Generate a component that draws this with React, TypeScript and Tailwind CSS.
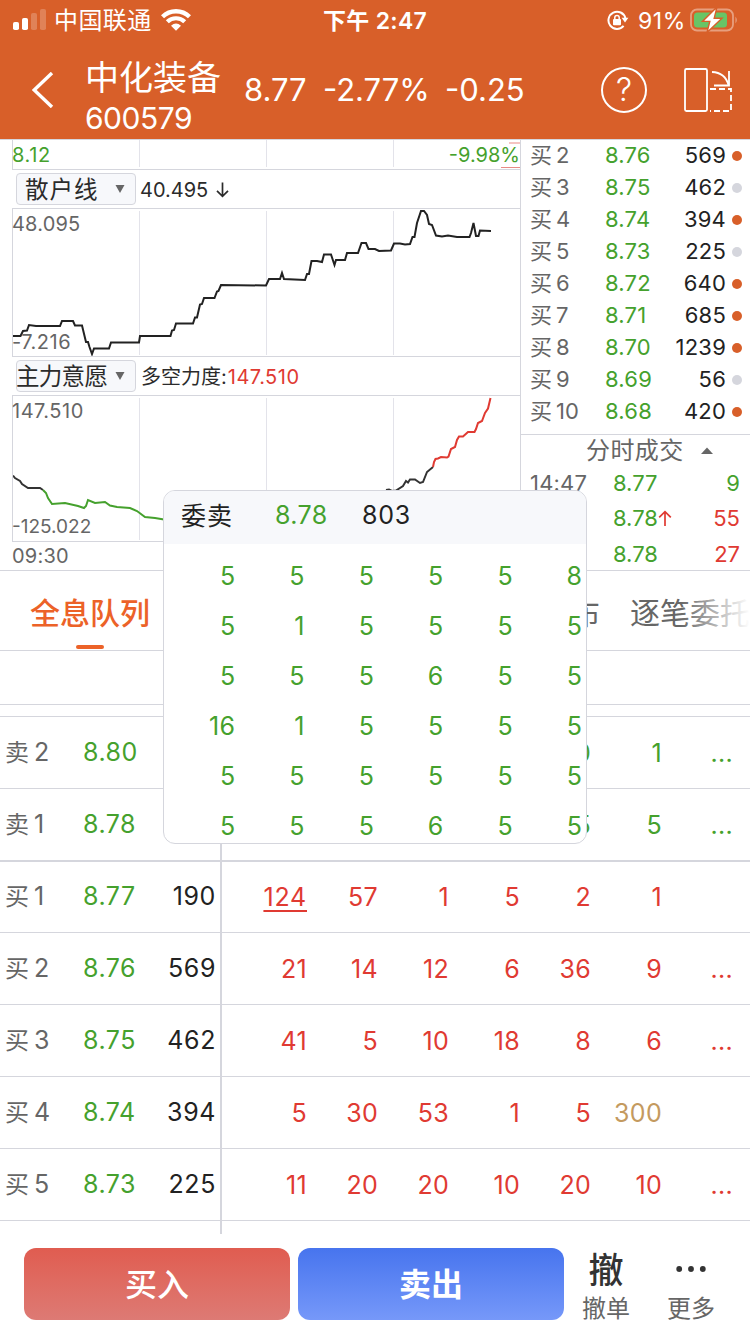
import React from 'react';

const buyLevels = [
  { level: '2', price: '8.76', volume: '569', active: true },
  { level: '3', price: '8.75', volume: '462', active: false },
  { level: '4', price: '8.74', volume: '394', active: true },
  { level: '5', price: '8.73', volume: '225', active: false },
  { level: '6', price: '8.72', volume: '640', active: true },
  { level: '7', price: '8.71', volume: '685', active: true },
  { level: '8', price: '8.70', volume: '1239', active: true },
  { level: '9', price: '8.69', volume: '56', active: false },
  { level: '10', price: '8.68', volume: '420', active: true },
];

const trades = [
  { time: '14:47', price: '8.77', arrow: false, volume: '9', up: false },
  { time: '', price: '8.78', arrow: true, volume: '55', up: true },
  { time: '', price: '8.78', arrow: false, volume: '27', up: true },
];

const sellQueue = [
  { side: '卖', level: '2', price: '8.80', volume: '', orders: ['', '', '', '', '10', '1', '...'] },
  { side: '卖', level: '1', price: '8.78', volume: '', orders: ['', '', '', '', '5', '5', '...'] },
];

const buyQueue = [
  { side: '买', level: '1', price: '8.77', volume: '190', orders: ['124', '57', '1', '5', '2', '1', ''] },
  { side: '买', level: '2', price: '8.76', volume: '569', orders: ['21', '14', '12', '6', '36', '9', '...'] },
  { side: '买', level: '3', price: '8.75', volume: '462', orders: ['41', '5', '10', '18', '8', '6', '...'] },
  { side: '买', level: '4', price: '8.74', volume: '394', orders: ['5', '30', '53', '1', '5', '300', ''] },
  { side: '买', level: '5', price: '8.73', volume: '225', orders: ['11', '20', '20', '10', '20', '10', '...'] },
];

const popupOrders = [
  ['5', '5', '5', '5', '5', '8'],
  ['5', '1', '5', '5', '5', '5'],
  ['5', '5', '5', '6', '5', '5'],
  ['16', '1', '5', '5', '5', '5'],
  ['5', '5', '5', '5', '5', '5'],
  ['5', '5', '5', '6', '5', '5'],
];

const retailLine =
  '13,336 20.5,336 23,331 27,330.5 29,325 36,326 60,326 62,321 73,321 75,325.5 82,325.5 86,342 88,342 89.5,347 92,354 94,348.5 109,348.5 111,342.5 139,342.5 140,336 170.5,336 172,330.5 174,330 176,323.5 193,323.5 195,317.5 197,317.5 200,304.5 202,304 204,298 214.5,298 217,291.5 218.5,291 221,285 266,285.5 269,279 280,279 282,273 284,279 305,280 307,274 309,274 311.5,261 317,261 322,262 324,254.5 331,254.5 334.5,265 336,260 345,260 347,253 358,253 361.5,243 366,243 368.5,249 375,249 379,251 391,250.5 394,243.5 400,243.5 405,244.5 410,244 412.5,237 414.5,237 417,223 421,211 424,211 427,215 429,224 432,225 436,235.5 442,236.5 448,235.5 457,237 469.5,237 471,233 473.5,223 476,236 478.5,236 480,230.5 491,231';

const StatusBar = () => (
  <div className="flex h-10 items-center text-white">
    <svg className="ml-[13px] h-[22px] w-[34px]" viewBox="0 0 34 22" fill="#fff">
      <rect x="0" y="13" width="6" height="8" rx="1.8" />
      <rect x="9" y="9" width="6" height="12" rx="1.8" />
      <rect x="18" y="4" width="6" height="17" rx="1.8" opacity="0.22" />
      <rect x="27" y="0" width="6" height="21" rx="1.8" opacity="0.22" />
    </svg>
    <span className="ml-[7px] w-[98px] pt-0.5 text-[24px] leading-none tracking-[0.4px] whitespace-nowrap">中国联通</span>
    <svg className="ml-[9px] h-[22px] w-[30px]" viewBox="0 0 30 22" fill="none" stroke="#fff">
      <path d="M1.5 7.8 A19.3 19.3 0 0 1 28.5 7.8" strokeWidth="4.4" />
      <path d="M6.3 12.8 A12.4 12.4 0 0 1 23.7 12.8" strokeWidth="4.2" />
      <path d="M10 16.8 Q15 12.4 20 16.8 L15 21.8 Z" fill="#fff" stroke="none" />
    </svg>
    <span className="ml-[132px] w-[106px] pt-0.5 text-[23px] font-semibold leading-none tracking-[0.3px] whitespace-nowrap">
      下午 2:47
    </span>
    <svg className="ml-[178px] h-5 w-[22px]" viewBox="0 0 22 20" fill="none" stroke="#fff" strokeWidth="2">
      <path d="M16.6 15.9 A8.6 8.6 0 1 1 18.4 8.2" />
      <path d="M14.6 7.8 H21.4 L18 12.6 Z" fill="#fff" stroke="none" />
      <rect x="6" y="9" width="8" height="6.2" rx="1" fill="#fff" stroke="none" />
      <path d="M7.8 9.5 V7.6 A2.2 2.2 0 0 1 12.2 7.6 V9.5" strokeWidth="1.5" />
    </svg>
    <span className="ml-[9px] w-[49px] pt-0.5 text-[23px] leading-none tracking-[0.6px] whitespace-nowrap">91%</span>
    <svg className="ml-[3px] h-6 w-[50px]" viewBox="0 0 50 24" fill="none">
      <rect x="1" y="1.5" width="42" height="21" rx="6" stroke="#fff" strokeOpacity="0.4" strokeWidth="1.8" />
      <path d="M45.5 8.5 Q48 12 45.5 15.5 Z" fill="#fff" fillOpacity="0.45" />
      <rect x="4" y="4.5" width="33" height="15" rx="3.5" fill="#68c466" />
      <path d="M27 -1 L12.5 13.4 H19.8 L17 24.5 L32 10.2 H24.2 Z" fill="#fff" stroke="#d85f29" strokeWidth="1.4" />
    </svg>
  </div>
);

const TitleBar = () => (
  <div className="flex h-[99px] items-center text-white">
    <svg className="ml-8 h-9 w-[22px]" viewBox="0 0 22 36" fill="none" stroke="#fff" strokeWidth="3.4">
      <path d="M20 1 L2.2 18 L20 35" />
    </svg>
    <div className="ml-[31px] w-[135px] pt-3.5">
      <div className="mt-0.5 text-[34px] leading-[40px] whitespace-nowrap">中化装备</div>
      <div className="mt-px text-[30px] leading-[38px] tracking-[-0.5px]">600579</div>
    </div>
    <div className="ml-6 flex h-9 w-[290px] items-center text-[31px] leading-none whitespace-nowrap">
      <span className="w-[79px]">8.77</span>
      <span className="w-[122px]">-2.77%</span>
      <span>-0.25</span>
    </div>
    <div className="ml-[67px] flex h-[46px] w-[46px] items-center justify-center rounded-full border-2 border-white text-[32px] leading-none font-light">
      ?
    </div>
    <svg className="ml-[36px] h-[46px] w-[50px]" viewBox="0 0 50 46" fill="none" stroke="#fff" strokeWidth="1.8">
      <rect x="2" y="2" width="22" height="42" rx="1.5" />
      <path d="M29 5 Q42 5.5 45.5 18" />
      <path d="M46 4 V18.5 H31" />
      <path d="M27 22 H48 V44 H27" strokeDasharray="6 3" />
    </svg>
  </div>
);

const IndicatorSelect = ({ name, padded }: { name: string; padded?: boolean }) => (
  <div
    className={`flex h-8 w-[120px] items-center rounded border border-[#d5d6dd] bg-[#f7f8fb] text-[#2b2b2b] ${
      padded ? 'pl-2' : 'pl-0'
    }`}
  >
    <span
      className={`pt-0.5 text-[23.5px] leading-none whitespace-nowrap ${
        padded ? 'w-[90px] tracking-[1px]' : '-ml-px w-[99px] tracking-[-0.7px]'
      }`}
    >
      {name}
    </span>
    <svg className="mb-px h-2 w-[10px]" viewBox="0 0 10 8" fill="#666">
      <path d="M0.5 0 H9.5 L5 8 Z" />
    </svg>
  </div>
);

const GridLines = ({ top, bottom }: { top: number; bottom: number }) => (
  <g stroke="#e3e3ea" strokeWidth="1">
    <path d={`M139.5 ${top} V${bottom} M266.5 ${top} V${bottom} M393.5 ${top} V${bottom}`} />
  </g>
);

const ChartPanel = () => (
  <div className="w-[521px] border-r border-[#d5d6dd] pl-3">
    <div className="relative flex h-[30px] justify-between border-b border-l border-[#d5d6dd] text-[20px] leading-[31px] text-[#45a12d]">
      <svg className="absolute inset-0 h-[29px] w-[507px]" viewBox="13 140 507 29" fill="none">
        <GridLines top={140} bottom={167} />
        <path d="M509 143 H520" stroke="#f5c4c2" strokeWidth="2" />
        <path d="M501 167.5 H520" stroke="#e88a86" />
      </svg>
      <span className="relative -ml-px tracking-[0.6px]">8.12</span>
      <span className="relative">-9.98%</span>
    </div>
    <div className="flex h-[38px] items-center pl-1 text-[#2b2b2b]">
      <IndicatorSelect name="散户线" padded />
      <span className="ml-1 pt-0.5 text-[20px] leading-none">40.495</span>
      <svg className="mt-0.5 ml-2 h-4 w-[13px]" viewBox="0 0 13 16" fill="none" stroke="#2b2b2b" strokeWidth="1.7">
        <path d="M6.5 0.5 V14 M1 8.8 L6.5 14.3 L12 8.8" />
      </svg>
    </div>
    <div className="relative h-[149px] border-y border-l border-[#d5d6dd] text-[20px] leading-none tracking-[0.2px] text-[#666]">
      <svg className="absolute inset-0 h-[147px] w-[507px]" viewBox="13 209 507 147" fill="none">
        <GridLines top={211} bottom={355} />
        <polyline points={retailLine} stroke="#222" strokeWidth="2" />
      </svg>
      <div className="relative -ml-px flex h-full flex-col justify-between pt-[5px] pb-1">
        <span>48.095</span>
        <span className="tracking-[0.5px]">-7.216</span>
      </div>
    </div>
    <div className="flex h-[38px] items-center pl-1 text-[#2b2b2b]">
      <IndicatorSelect name="主力意愿" />
      <span className="ml-[5px] pt-0.5 text-[20px] leading-none whitespace-nowrap">
        多空力度:<span className="ml-px tracking-[0.5px] text-[#e03a32]">147.510</span>
      </span>
    </div>
    <div className="relative h-[147px] border-y border-l border-[#d5d6dd] text-[20px] leading-none text-[#666]">
      <svg className="absolute inset-0 h-[145px] w-[507px]" viewBox="13 396 507 145" fill="none" strokeWidth="2">
        <GridLines top={398} bottom={540} />
        <polyline stroke="#333" points="13,475.5 15,478 20,481 22,484 28,488 40,488 43,490" />
        <polyline
          stroke="#45a12d"
          points="43,490 46,493 48,498 52,504 65,503 78,506 84,508 86,506 88,500 95,503 105,502 110,505.5 117,507 130,508 137,511 145,517 155,518 164,519.5"
        />
        <polyline
          stroke="#333"
          points="386,490 389,489.5 392,491 396,490.5 403,486 406,481 408,482.5 410,479.5 415,479.5 420,483 423,482 427,472 433,467"
        />
        <polyline
          stroke="#e03a32"
          points="433,467 434,462 435.5,459 438,458.5 441,457 447,457.5 448.5,456.5 451,449 455,447 457,440 459,436.5 463,436.5 468,432 474.5,432 476,429 478,423 482,421 485,413 488,408.5 490.5,398"
        />
      </svg>
      <div className="relative -ml-px flex h-full flex-col justify-between pt-[5px] pb-[5px]">
        <span className="tracking-[0.5px]">147.510</span>
        <span className="text-[19px]">-125.022</span>
      </div>
    </div>
    <div className="pt-0.5 text-[20px] leading-[24px] tracking-[0.2px] text-[#666]">09:30</div>
  </div>
);

const OrderBook = () => (
  <div className="w-[229px]">
    <div className="h-[295px] border-b border-[#d5d6dd]">
      {buyLevels.map((row) => (
        <div key={row.level} className="flex h-8 items-center pb-0.5 pl-[9px] text-[22px] leading-none">
          <span className="w-[26px] text-[#666]">买</span>
          <span className="w-[49px] text-[#666]">{row.level}</span>
          <span className="w-[50px] tracking-[0.2px] text-[#45a12d]">{row.price}</span>
          <span className="w-[71px] text-right tracking-[0.2px] text-[#222]">{row.volume}</span>
          <span className={`mt-0.5 ml-1.5 h-2.5 w-2.5 rounded-full ${row.active ? 'bg-[#d85f29]' : 'bg-[#d5d6dd]'}`} />
        </div>
      ))}
    </div>
    <div className="flex h-[30px] items-center pl-[65px] text-[24px] leading-none text-[#666]">
      <span className="pt-0.5 tracking-[0.4px]">分时成交</span>
      <svg className="ml-[17px] h-[7px] w-3" viewBox="0 0 12 7" fill="#666">
        <path d="M0 7 L6 0.5 L12 7 Z" />
      </svg>
    </div>
    {trades.map((trade, i) => (
      <div key={i} className="flex h-[35.5px] items-center pr-2.5 pl-[9px] text-[22px] leading-none">
        <span className="w-[83px] tracking-[0.2px] text-[#666]">{trade.time}</span>
        <span className="w-[45px] text-[#45a12d]">{trade.price}</span>
        {trade.arrow && (
          <svg className="h-4 w-[14px]" viewBox="0 0 14 16" fill="none" stroke="#e03a32" strokeWidth="1.7">
            <path d="M7 16 V2 M1.2 7.4 L7 1.6 L12.8 7.4" />
          </svg>
        )}
        <span className={`flex-1 text-right ${trade.up ? 'text-[#e03a32]' : 'text-[#45a12d]'}`}>{trade.volume}</span>
      </div>
    ))}
  </div>
);

const Tabs = () => (
  <div className="relative flex h-20 items-center justify-between overflow-hidden border-b border-[#d5d6dd] pl-[30px] text-[30px] leading-none whitespace-nowrap text-[#666]">
    <div className="relative flex h-full items-center pt-1 font-medium text-[#ec6228]">
      全息队列
      <span className="absolute bottom-px left-[46px] h-1 w-7 rounded-full bg-[#ec6228]" />
    </div>
    <div className="flex gap-[30px] pt-1">
      <span>分布</span>
      <span>逐笔委托</span>
    </div>
    <div className="absolute inset-y-0 right-0 w-[70px] bg-linear-to-r from-white/0 to-white" />
  </div>
);

type QueueRowData = { side: string; level: string; price: string; volume: string; orders: string[] };

const QueueRow = ({ row, color }: { row: QueueRowData; color: string }) => (
  <div className="flex h-[72px] border-b border-[#d5d6dd] text-[25px] leading-none tracking-[0.3px]">
    <div className="flex w-[222px] items-center border-r-2 border-[#d5d6dd] pl-[5px]">
      <span className="w-[29px] text-[24px] text-[#666]">{row.side}</span>
      <span className="w-[49px] text-[#666]">{row.level}</span>
      <span className="w-[54px] tracking-[0.5px] text-[#45a12d]">{row.price}</span>
      <span className="w-[79px] text-right tracking-[0.6px] text-[#222]">{row.volume}</span>
    </div>
    <div className={`grid grid-cols-[repeat(7,71px)] items-center pt-0.5 pl-[14px] text-right ${color}`}>
      {row.orders.map((order, i) => (
        <span
          key={i}
          className={`${order === '124' ? 'tracking-[0.8px] underline decoration-2 underline-offset-4' : ''} ${
            order === '300' ? 'text-[#c49a5f]' : ''
          }`}
        >
          {order}
        </span>
      ))}
    </div>
  </div>
);

const QueuePopup = () => (
  <div className="absolute top-[490px] left-[163px] h-[354px] w-[424px] overflow-hidden rounded-xl border border-[#d5d6dd] bg-white leading-none">
    <div className="flex h-[53px] items-center bg-[#f7f8fb] pb-1 pl-[17px] text-[25px] text-[#222]">
      <span className="w-[94px] pt-px tracking-[1px]">委卖</span>
      <span className="w-[87px] tracking-[0.4px] text-[#45a12d]">8.78</span>
      <span className="tracking-[0.8px]">803</span>
    </div>
    <div className="grid grid-cols-[repeat(6,69.4px)] pt-[7px] pl-[2px] text-right text-[25px] text-[#45a12d]">
      {popupOrders.flat().map((order, i) => (
        <span key={i} className="h-[50px] leading-[51px] tracking-[0.3px]">
          {order}
        </span>
      ))}
    </div>
  </div>
);

const BottomBar = () => (
  <div className="flex h-[100px] bg-white pt-3.5 pl-6 leading-none">
    <button className="h-[72px] w-[266px] rounded-xl bg-linear-to-b from-[#e05c50] to-[#dd7a74] pt-0.5 text-[32px] font-medium text-white">
      买入
    </button>
    <button className="ml-2 h-[72px] w-[266px] rounded-xl bg-linear-to-b from-[#4774ee] to-[#7698f9] pt-0.5 text-[32px] font-bold text-white">
      卖出
    </button>
    <div className="ml-4 flex w-[52px] flex-col items-center">
      <span className="mt-[5px] text-[35px] font-medium text-[#333]">撤</span>
      <span className="mt-[9px] text-[24px] whitespace-nowrap text-[#666]">撤单</span>
    </div>
    <div className="ml-[33px] flex w-[52px] flex-col items-center">
      <svg className="mt-[18px] h-[6px] w-[30px]" viewBox="0 0 30 6" fill="#333">
        <circle cx="3.2" cy="3" r="2.9" />
        <circle cx="15" cy="3" r="2.9" />
        <circle cx="26.8" cy="3" r="2.9" />
      </svg>
      <span className="mt-[25px] text-[24px] whitespace-nowrap text-[#666]">更多</span>
    </div>
  </div>
);

const App: React.FC = () => {
  return (
    <div className="relative h-[1334px] w-[750px] overflow-hidden bg-white font-['Inter','Noto_Sans_CJK_SC',sans-serif]">
      <header className="bg-[#d85f29]">
        <StatusBar />
        <TitleBar />
      </header>
      <div className="flex h-[432px] border-y border-[#d5d6dd]">
        <ChartPanel />
        <OrderBook />
      </div>
      <Tabs />
      <div className="h-[54px] border-b border-[#d5d6dd]" />
      <div className="h-3 border-b border-[#d5d6dd]" />
      {sellQueue.map((row) => (
        <QueueRow key={row.level} row={row} color="text-[#45a12d]" />
      ))}
      <div className="h-px bg-[#d5d6dd]" />
      <div className="-mt-px">
        {buyQueue.map((row) => (
          <QueueRow key={row.level} row={row} color="text-[#e03a32]" />
        ))}
      </div>
      <div className="h-[13px] w-[222px] border-r-2 border-[#d5d6dd]" />
      <BottomBar />
      <QueuePopup />
    </div>
  );
};

export default App;
